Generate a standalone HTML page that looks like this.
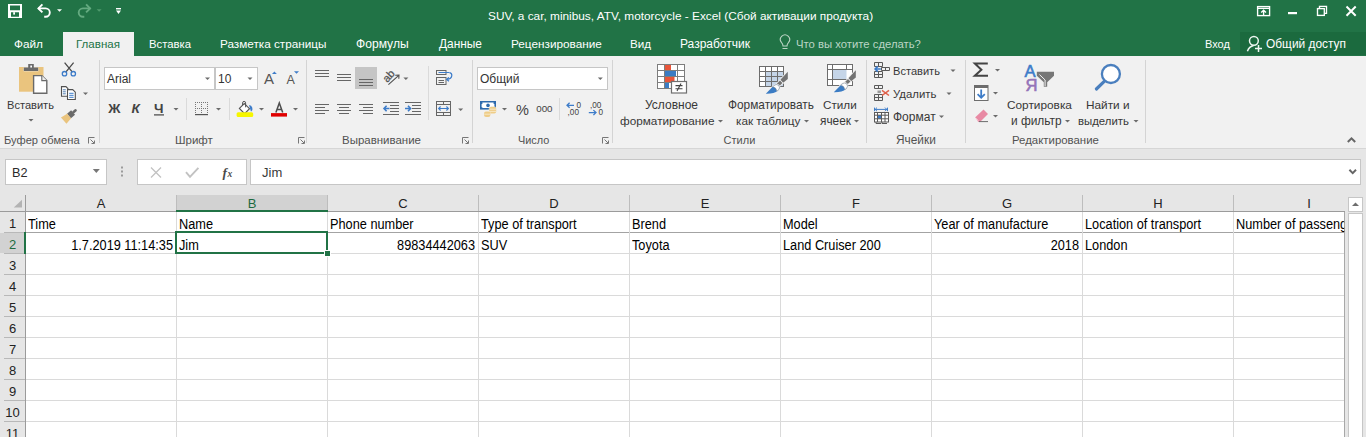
<!DOCTYPE html>
<html><head><meta charset="utf-8">
<style>
*{margin:0;padding:0;box-sizing:border-box}
html,body{width:1366px;height:437px;overflow:hidden;background:#e6e6e6;font-family:"Liberation Sans",sans-serif;position:relative}
.a{position:absolute;white-space:nowrap;line-height:16px}
.tt{color:#fff;font-size:11.83px}
.tab{color:#fff;font-size:11.7px;top:36px}
.rl{font-size:11.7px;color:#383838}
.gl{font-size:11.5px;color:#525252;top:132px}
.cell{font-size:14px;color:#000;line-height:16px;transform:scaleX(0.91);transform-origin:0 0}
.cr{transform-origin:100% 0}
.hd{font-size:13px;line-height:16px}
svg{position:absolute;left:0;top:0;overflow:visible}
</style></head><body>
<div class="a" style="left:0;top:0;width:1366px;height:56px;background:#217346"></div>
<div class="a tt" style="left:488px;top:8px">SUV, a car, minibus, ATV, motorcycle - Excel (Сбой активации продукта)</div>
<div class="a" style="left:63px;top:32px;width:71px;height:24px;background:#f1f1f1"></div>
<div class="a" style="left:1240px;top:32px;width:126px;height:23px;background:#1b6a3e"></div>
<div class="a tab" style="left:14px;font-size:11.79px">Файл</div>
<div class="a tab" style="left:76px;color:#217346;font-size:11.56px">Главная</div>
<div class="a tab" style="left:149px;font-size:11.3px">Вставка</div>
<div class="a tab" style="left:220px;font-size:11.74px">Разметка страницы</div>
<div class="a tab" style="left:356px;font-size:12.1px">Формулы</div>
<div class="a tab" style="left:439px;font-size:11.9px">Данные</div>
<div class="a tab" style="left:511px;font-size:11.78px">Рецензирование</div>
<div class="a tab" style="left:630px;font-size:11.6px">Вид</div>
<div class="a tab" style="left:680px;font-size:12px">Разработчик</div>
<div class="a tab" style="left:796px;color:#bcd5c5;font-size:11.31px">Что вы хотите сделать?</div>
<div class="a tab" style="left:1205px;font-size:11px">Вход</div>
<div class="a tab" style="left:1266px;font-size:11.91px">Общий доступ</div>
<svg width="1366" height="56">
<g fill="#fff">
<path d="M8 4h14v14h-14z M10 5.5v4.8h10v-4.8z M11 12.2v4.5h8v-4.5z" fill-rule="evenodd"/>
<rect x="13.2" y="12.2" width="1.8" height="2.4"/>
</g>
<g fill="none" stroke="#fff" stroke-width="1.9">
<path d="M38 8.4h7.6a4.2 4.2 0 0 1 0 8.4h-1.4"/>
<path d="M42.4 4.4l-4 4l4 4"/>
</g>
<path d="M57 9.2h5l-2.5 2.5z" fill="#fff"/>
<g fill="none" stroke="#64aa80" stroke-width="1.9">
<path d="M90.5 8.4h-7.6a4.2 4.2 0 0 0 0 8.4h1.4"/>
<path d="M86.1 4.4l4 4l-4 4"/>
</g>
<path d="M96.6 9.2h5l-2.5 2.5z" fill="#4f9a6d"/>
<rect x="116" y="8" width="5" height="1.4" fill="#fff"/>
<path d="M116 10.6h5l-2.5 3.3z" fill="#fff"/>
<g fill="none" stroke="#fff" stroke-width="1.35">
<rect x="1257.6" y="6.6" width="12" height="9"/>
<path d="M1257.6 8.4h12 M1263.6 16v-5.6 M1261.2 12.6l2.4-2.4l2.4 2.4"/>
<rect x="1317.5" y="8.6" width="6.8" height="6.8"/>
<path d="M1319.5 8.6v-2.2h7v7h-2.2"/>
</g>
<rect x="1288" y="12" width="9" height="2.2" fill="#fff"/>
<path d="M1346.5 6.5l9.2 9.2M1355.7 6.5l-9.2 9.2" stroke="#fff" stroke-width="2"/>
<g fill="none" stroke="#eef6f1" stroke-width="1.5">
<circle cx="1253.9" cy="40.8" r="4.4"/>
<path d="M1247.4 51.2q1.8-4.6 6.2-5.6"/>
<path d="M1255 48.5h7M1258.5 45v7"/>
</g>
<g fill="none" stroke="#bcd5c5" stroke-width="1.1">
<path d="M782.5 48.5h5M783 46q0-2-1.6-3.6a4.6 4.6 0 1 1 7.2 0q-1.6 1.6-1.6 3.6z"/>
</g>
</svg>
<div class="a" style="left:0;top:56px;width:1366px;height:92px;background:#f1f1f1"></div>
<div class="a" style="left:0;top:148px;width:1366px;height:1px;background:#d6d6d6"></div>
<!-- separators -->
<div class="a" style="left:99px;top:60px;width:1px;height:83px;background:#d4d4d4"></div>
<div class="a" style="left:306px;top:60px;width:1px;height:83px;background:#d4d4d4"></div>
<div class="a" style="left:472px;top:60px;width:1px;height:83px;background:#d4d4d4"></div>
<div class="a" style="left:612px;top:60px;width:1px;height:83px;background:#d4d4d4"></div>
<div class="a" style="left:866px;top:60px;width:1px;height:83px;background:#d4d4d4"></div>
<div class="a" style="left:965px;top:60px;width:1px;height:83px;background:#d4d4d4"></div>
<div class="a" style="left:1145px;top:60px;width:1px;height:83px;background:#d4d4d4"></div>
<!-- small separators -->
<div class="a" style="left:186px;top:98px;width:1px;height:22px;background:#dadada"></div>
<div class="a" style="left:229px;top:98px;width:1px;height:22px;background:#dadada"></div>
<div class="a" style="left:428px;top:66px;width:1px;height:54px;background:#dadada"></div>
<div class="a" style="left:559px;top:98px;width:1px;height:22px;background:#dadada"></div>
<!-- group labels -->
<div class="a gl" style="left:4px;font-size:11.14px">Буфер обмена</div>
<div class="a gl" style="left:175px">Шрифт</div>
<div class="a gl" style="left:342px;font-size:11.48px">Выравнивание</div>
<div class="a gl" style="left:518px;font-size:10.9px">Число</div>
<div class="a gl" style="left:723.6px;font-size:11px">Стили</div>
<div class="a gl" style="left:896px;font-size:11.87px">Ячейки</div>
<div class="a gl" style="left:1012px;font-size:11.42px">Редактирование</div>
<!-- button labels -->
<div class="a rl" style="left:7px;top:97px;font-size:11.09px">Вставить</div>
<div class="a rl" style="left:645px;top:97px;font-size:12px">Условное</div>
<div class="a rl" style="left:620px;top:113px;font-size:11.77px">форматирование</div>
<div class="a rl" style="left:728px;top:97px;font-size:11.85px">Форматировать</div>
<div class="a rl" style="left:736px;top:113px;font-size:11.78px">как таблицу</div>
<div class="a rl" style="left:823px;top:97px;font-size:11.7px">Стили</div>
<div class="a rl" style="left:820px;top:113px;font-size:11.86px">ячеек</div>
<div class="a rl" style="left:893px;top:63px;font-size:11.09px">Вставить</div>
<div class="a rl" style="left:893px;top:86px;font-size:11.39px">Удалить</div>
<div class="a rl" style="left:893px;top:109px;font-size:12px">Формат</div>
<div class="a rl" style="left:1007px;top:97px;font-size:11.84px">Сортировка</div>
<div class="a rl" style="left:1011px;top:113px;font-size:11.9px">и фильтр</div>
<div class="a rl" style="left:1086px;top:97px;font-size:11.82px">Найти и</div>
<div class="a rl" style="left:1078px;top:113px;font-size:11.39px">выделить</div>
<!-- boxes -->
<div class="a" style="left:104px;top:67px;width:111px;height:23px;background:#fff;border:1px solid #c6c6c6"></div>
<div class="a" style="left:215px;top:67px;width:43px;height:23px;background:#fff;border:1px solid #c6c6c6"></div>
<div class="a" style="left:477px;top:67px;width:131px;height:23px;background:#fff;border:1px solid #c6c6c6"></div>
<div class="a rl" style="left:107px;top:71px;font-size:12px;color:#333">Arial</div>
<div class="a rl" style="left:218px;top:71px;font-size:12px;color:#333">10</div>
<div class="a rl" style="left:480px;top:71px;font-size:12px;color:#333">Общий</div>
<div class="a" style="left:355px;top:67px;width:22px;height:22px;background:#c5c5c5"></div>
<svg width="1366" height="150">
<!-- dropdown arrows -->
<g fill="#6b6b6b">
<path d="M28.5 119h5l-2.5 2.5z"/>
<path d="M83 92.4h5l-2.5 2.5z"/>
<path d="M205 77.5h5l-2.5 2.5z"/>
<path d="M247.5 77.5h5l-2.5 2.5z"/>
<path d="M173.5 108h5l-2.5 2.5z"/>
<path d="M216 108h5l-2.5 2.5z"/>
<path d="M259 108h5l-2.5 2.5z"/>
<path d="M293 108h5l-2.5 2.5z"/>
<path d="M403.4 77.4h5l-2.5 2.5z"/>
<path d="M458.2 108.4h5l-2.5 2.5z"/>
<path d="M597.8 77.5h5l-2.5 2.5z"/>
<path d="M502 108h5l-2.5 2.5z"/>
<path d="M718 120h5l-2.5 2.5z"/>
<path d="M804 120h5l-2.5 2.5z"/>
<path d="M854 120h5l-2.5 2.5z"/>
<path d="M950.5 69.4h5l-2.5 2.5z"/>
<path d="M946.5 92.4h5l-2.5 2.5z"/>
<path d="M939 115.4h5l-2.5 2.5z"/>
<path d="M995 69h5l-2.5 2.5z"/>
<path d="M993 92h5l-2.5 2.5z"/>
<path d="M993 115h5l-2.5 2.5z"/>
<path d="M1065 120h5l-2.5 2.5z"/>
<path d="M1133.5 120h5l-2.5 2.5z"/>
</g>
<!-- launchers -->
<g fill="none" stroke="#777" stroke-width="1">
<path d="M88.5 143.5v-6h6 M90.5 139.5l3.5 3.5 M91.5 143.5h3v-3"/>
<path d="M298.5 143.5v-6h6 M300.5 139.5l3.5 3.5 M301.5 143.5h3v-3"/>
<path d="M462.5 143.5v-6h6 M464.5 139.5l3.5 3.5 M465.5 143.5h3v-3"/>
<path d="M602.5 143.5v-6h6 M604.5 139.5l3.5 3.5 M605.5 143.5h3v-3"/>
</g>
<path d="M1347.8 142l3.7-3.7 3.7 3.7" fill="none" stroke="#666" stroke-width="2"/>
<!-- clipboard -->
<rect x="19" y="67" width="24.5" height="24.7" fill="#eac47e"/>
<path d="M23.8 67.6h14.4v3.4h-14.4z M28.2 64h5.6v4.2h-5.6z" fill="#6a6a6a" stroke="#f1f1f1" stroke-width="0.6" paint-order="stroke"/>
<rect x="30.3" y="65.5" width="1.7" height="2" fill="#fff"/>
<path d="M33.6 75.6h8.2l5 5v12.6h-13.2z" fill="#fff" stroke="#6a6a6a" stroke-width="1.4"/>
<path d="M41.8 75.6v5h5" fill="#eee" stroke="#6a6a6a" stroke-width="1.1"/>
<!-- scissors -->
<g fill="none" stroke-width="1.3">
<path d="M64.6 62.6l7.6 9.2M73.6 62.6l-7.6 9.2" stroke="#4a4a4a"/>
<circle cx="64.5" cy="73.7" r="2.2" stroke="#3d7cc9"/>
<circle cx="73.3" cy="73.7" r="2.2" stroke="#3d7cc9"/>
</g>
<!-- copy -->
<g stroke="#505050" stroke-width="1.1" fill="#fff">
<path d="M61.5 86.6h4.4l2 2v7.6h-6.4z"/>
<path d="M67.5 89.6h5.2l2.6 2.6v7.3h-7.8z"/>
</g>
<path d="M62.8 89.8h3M62.8 91.8h3M62.8 93.8h3" stroke="#3d6fa8" stroke-width="0.9"/>
<path d="M69.2 93.3h4.4M69.2 95.3h4.4M69.2 97.3h4.4" stroke="#3d7cc9" stroke-width="1"/>
<!-- format painter -->
<g transform="translate(76.4 109.6) rotate(139)">
<rect x="0" y="-1.3" width="5" height="2.6" rx="1" fill="#6a6a6a"/>
<rect x="4.4" y="-3" width="5.4" height="6" fill="#6a6a6a"/>
<path d="M9.8 -3.2h0.8l6.2 -1v8.4l-6.2 -1h-0.8z" fill="#eac47e"/>
</g>
<!-- grow/shrink font -->
<text x="264" y="84" font-size="15" fill="#555" font-family="Liberation Sans">A</text>
<path d="M272 74l2.4-2.6 2.4 2.6z" fill="#3d7cc9"/>
<text x="286.5" y="84" font-size="12.5" fill="#555" font-family="Liberation Sans">A</text>
<path d="M294 71.2h5l-2.5 2.6z" fill="#3d7cc9"/>
<!-- B I U -->
<text x="108.3" y="113.3" font-size="13.5" font-weight="bold" fill="#444" font-family="Liberation Sans">Ж</text>
<text x="131.5" y="113.3" font-size="13.5" font-weight="bold" font-style="italic" fill="#444" font-family="Liberation Sans">К</text>
<text x="154" y="113" font-size="13.5" font-weight="bold" fill="#444" font-family="Liberation Sans">Ч</text>
<rect x="154" y="114.3" width="10" height="1.2" fill="#444"/>
<!-- borders -->
<g stroke="#777" stroke-width="1" stroke-dasharray="1 1" fill="none">
<path d="M195 102.5h13M195 108.5h13M195.5 102v12M201.5 102v12M207.5 102v12"/>
</g>
<rect x="195" y="114" width="13" height="1.2" fill="#555"/>
<!-- fill color -->
<path d="M239.4 108.4l4.9-4.9 5.2 5.2-4.9 4.9z" fill="#fff" stroke="#555" stroke-width="1.1"/>
<path d="M242.6 105.2v-2.3a1.5 1.5 0 0 1 3 0v4.4" fill="none" stroke="#555" stroke-width="1"/>
<path d="M249 105a3.8 3.8 0 0 1 2 6.8z" fill="#3d7cc9"/>
<rect x="236.6" y="112.3" width="16.6" height="4.8" rx="1.5" fill="#f6f600"/>
<!-- font color -->
<path d="M275.9 112.6l3.4-9.6 3.4 9.6M277.1 109.4h4.4" fill="none" stroke="#4d4d4d" stroke-width="1.5"/>
<rect x="271" y="113.1" width="16" height="3.5" fill="#e00000"/>
<!-- alignment lines -->
<g stroke="#666" stroke-width="1">
<path d="M315 70.5h14M315 73.5h14M315 76.5h14"/>
<path d="M337 74.5h14M337 77.5h14M337 80.5h14"/>
<path d="M359 79.5h14M359 82.5h14M359 85.5h14"/>
<path d="M315 104.5h14M315 107.5h10M315 110.5h14M315 113.5h10"/>
<path d="M337 104.5h14M339 107.5h10M337 110.5h14M339 113.5h10"/>
<path d="M359 104.5h14M363 107.5h10M359 110.5h14M363 113.5h10"/>
<path d="M383 102.5h16M390 105.5h9M390 108.5h9M390 111.5h9M383 114.5h16"/>
<path d="M405 102.5h16M412 105.5h9M412 108.5h9M412 111.5h9M405 114.5h16"/>
</g>
<path d="M384 108.5h5.5M386.6 105.7l-2.6 2.8 2.6 2.8" stroke="#3d7cc9" stroke-width="1.6" fill="none"/>
<path d="M405 108.5h5.5M408 105.7l2.6 2.8-2.6 2.8" stroke="#3d7cc9" stroke-width="1.6" fill="none"/>
<!-- orientation -->
<text x="0" y="0" font-size="11" fill="#505050" stroke="#505050" stroke-width="0.25" font-family="Liberation Sans" transform="translate(387.2 83) rotate(-47)">ab</text>
<path d="M388.4 84.6l10.4-9.2M395.2 75.2l3.8-0.2-0.2 3.8" stroke="#505050" stroke-width="1.1" fill="none"/>
<!-- wrap text -->
<g fill="none" stroke="#666" stroke-width="1">
<rect x="436.5" y="70.5" width="9.5" height="4"/>
<rect x="436.5" y="77.5" width="9.5" height="7"/>
<path d="M438.5 80.5h5.5M438.5 82.5h5.5"/>
</g>
<path d="M438.5 72.5h11" stroke="#3d7cc9" stroke-width="1"/>
<path d="M449.6 72.6q2.4 0.6 2.2 3-0.4 3.2-4.6 3.9M448.8 77.3l-2.2 2.2 2.4 1.8" fill="none" stroke="#3d7cc9" stroke-width="1.2"/>
<!-- merge -->
<g fill="none" stroke="#666" stroke-width="1">
<rect x="436.5" y="101.5" width="14" height="14"/>
<path d="M436.5 104.5h14M436.5 112.5h14M443.5 101.5v3M443.5 112.5v3"/>
</g>
<path d="M438.6 108.5h9.8M440.6 106.5l-2 2 2 2M446.4 106.5l2 2-2 2" stroke="#3d7cc9" stroke-width="1.1" fill="none"/>
<!-- number -->
<rect x="480" y="101" width="16" height="8.6" fill="#2e6aad"/>
<path d="M482.4 102.6h11.2v1.4h0.8v3.2h-0.8v0.8h-11.2v-0.8h-0.8v-3.2h0.8z" fill="#fff"/>
<circle cx="488" cy="105.4" r="1.8" fill="#2e6aad"/>
<g fill="#efcd88" stroke="#f1f1f1" stroke-width="0.6" paint-order="stroke">
<rect x="489.2" y="106.8" width="7" height="6.8" rx="2"/>
<rect x="484" y="111.6" width="6.4" height="5.4" rx="2"/>
</g>
<g stroke="#fbf3e0" stroke-width="0.7"><path d="M489.4 109.2h6.6M489.4 111.4h6.6M484.2 114.2h6"/></g>
<text x="516" y="114.8" font-size="14.5" fill="#444" font-family="Liberation Sans">%</text>
<text x="536.3" y="111.8" font-size="9.8" fill="#444" font-family="Liberation Sans" letter-spacing="-0.1">000</text>
<g font-family="Liberation Sans" font-size="8.2" fill="#444">
<text x="576.6" y="107.6">0</text>
<text x="567.6" y="115.2">,00</text>
<text x="590" y="107.6">,00</text>
<text x="598.4" y="115.2">0</text>
</g>
<path d="M567 105.3h7M569.6 102.8l-2.6 2.5 2.6 2.5" stroke="#3d7cc9" stroke-width="1.3" fill="none"/>
<path d="M588.8 112.6h7M593.4 110.1l2.6 2.5-2.6 2.5" stroke="#3d7cc9" stroke-width="1.3" fill="none"/>
<!-- conditional formatting -->
<rect x="657.5" y="64.5" width="27" height="24" fill="#fff"/>
<rect x="665" y="65" width="6" height="5" fill="#e8553a"/>
<rect x="665" y="71" width="11" height="5" fill="#3b7cc4"/>
<rect x="665" y="77" width="9.5" height="5" fill="#e8553a"/>
<rect x="665" y="83" width="4" height="5" fill="#3b7cc4"/>
<g fill="none" stroke="#7d7d7d" stroke-width="1">
<rect x="657.5" y="64.5" width="27" height="24"/>
<path d="M657.5 70.5h27M657.5 76.5h27M657.5 82.5h27M664.5 64.5v24M677.5 64.5v24"/>
</g>
<rect x="671.5" y="81.5" width="15" height="11.5" fill="#fff" stroke="#707070" stroke-width="1.2"/>
<path d="M675.5 85.6h7M675.5 88.8h7M681 83.6l-4 7.4" stroke="#444" stroke-width="1.1"/>
<!-- format as table -->
<rect x="759.5" y="66.5" width="24" height="20" fill="#fff"/>
<rect x="765.5" y="71.5" width="18" height="15" fill="#c5d5e8"/>
<g fill="none" stroke="#6d6d6d" stroke-width="1">
<rect x="759.5" y="66.5" width="24" height="20"/>
<path d="M759.5 71.5h24M759.5 76.5h24M759.5 81.5h24M765.5 66.5v20M771.5 66.5v20M777.5 66.5v20"/>
</g>
<g transform="translate(0 0)">
<g stroke="#f1f1f1" stroke-width="1.6" paint-order="stroke">
<path d="M787.8 71.8v7.2l-5 4-2.4-3.2z" fill="#737373"/>
<path d="M780 80.6l2.4 2.5-3.4 3.3-2.4-2.4z" fill="#737373"/>
<path d="M765.8 93.8l7.6-7.8q3-2.6 5.2-0.6 2.2 2.2-0.6 5.2-3.8 3.4-12.2 3.2z" fill="#3b7cc4"/>
</g>
<path d="M773.4 86q3-2.6 5.2-0.6 2.2 2.2-0.6 5.2l-1.2 0.4q-0.6-3.6-4-4.2z" fill="#fff" stroke="#8a8a8a" stroke-width="0.5"/>
</g>
<!-- cell styles -->
<rect x="827.5" y="64.5" width="25" height="21" fill="#fff"/>
<rect x="832.5" y="69.5" width="14" height="10" fill="#c5d5e8"/>
<g fill="none" stroke="#6d6d6d" stroke-width="1">
<rect x="827.5" y="64.5" width="25" height="21"/>
<path d="M827.5 69.5h25M827.5 79.5h25M832.5 64.5v21M846.5 64.5v5M846.5 79.5v6"/>
</g>
<g transform="translate(68 -1.6)">
<g stroke="#f1f1f1" stroke-width="1.6" paint-order="stroke">
<path d="M787.8 71.8v7.2l-5 4-2.4-3.2z" fill="#737373"/>
<path d="M780 80.6l2.4 2.5-3.4 3.3-2.4-2.4z" fill="#737373"/>
<path d="M765.8 93.8l7.6-7.8q3-2.6 5.2-0.6 2.2 2.2-0.6 5.2-3.8 3.4-12.2 3.2z" fill="#3b7cc4"/>
</g>
<path d="M773.4 86q3-2.6 5.2-0.6 2.2 2.2-0.6 5.2l-1.2 0.4q-0.6-3.6-4-4.2z" fill="#fff" stroke="#8a8a8a" stroke-width="0.5"/>
</g>
<!-- cells: insert -->
<g fill="none" stroke="#5a5a5a" stroke-width="1">
<path d="M874.5 62.5h8v4h-8z M878.5 62.5v4"/>
<path d="M874.5 71.5h8v6h-8z M874.5 74.5h8 M878.5 71.5v6"/>
<path d="M881.5 67.5h8v3h-8z M885.5 67.5v3"/>
</g>
<path d="M875.2 69h5.6M877.8 66.4l-2.6 2.6 2.6 2.6" stroke="#3d7cc9" stroke-width="1.7" fill="none"/>
<!-- cells: delete -->
<g fill="none" stroke="#5a5a5a" stroke-width="1">
<path d="M874.5 85.5h8v3h-8z M878.5 85.5v3"/>
<path d="M874.5 94.5h8v6h-8z M874.5 97.5h8 M878.5 94.5v6"/>
</g>
<rect x="877.5" y="90.5" width="3.5" height="2.6" fill="#999"/>
<path d="M882 90.3l7 5.2M889 90.3l-7 5.2" stroke="#e0604a" stroke-width="1.5"/>
<!-- cells: format -->
<path d="M875 109.4h12M877 107.6l-1.8 1.8 1.8 1.8M885 107.6l1.8 1.8-1.8 1.8M874.5 107.6v3.6M887.5 107.6v3.6" stroke="#3d7cc9" stroke-width="1" fill="none"/>
<rect x="874.5" y="112.5" width="14" height="9.5" fill="#fff"/>
<rect x="877.5" y="115.2" width="3.6" height="3.6" fill="#3d7cc9"/>
<g fill="none" stroke="#5a5a5a" stroke-width="1">
<rect x="874.5" y="112.5" width="14" height="9.5"/>
<path d="M874.5 115.2h14M874.5 118.8h14M877.5 112.5v9.5M881.5 112.5v9.5M885 112.5v9.5 M876 122v1.5h5 M882 122v1.5h5"/>
</g>
<!-- sigma -->
<path d="M987.8 63.4h-13l6.6 6.4-6.6 6h13.2" fill="none" stroke="#444" stroke-width="2" stroke-linejoin="miter" stroke-miterlimit="3"/>
<!-- fill -->
<rect x="974.5" y="85.5" width="13.5" height="15" fill="#fff" stroke="#6d6d6d" stroke-width="1"/>
<rect x="974.5" y="85.5" width="13.5" height="2.5" fill="#6d6d6d"/>
<path d="M981.2 89.5v8M977.6 94.2l3.6 3.6 3.6-3.6" stroke="#3d7cc9" stroke-width="1.8" fill="none"/>
<!-- eraser -->
<path d="M975 117.5l8.5-8 4.5 4.4-8 8.1h-1.6z" fill="#e88aa4"/>
<path d="M975 117.5l3.2 3.2" stroke="#fff" stroke-width="0.8"/>
<path d="M979 121.6h9" stroke="#6d6d6d" stroke-width="1"/>
<!-- sort -->
<text x="1024.6" y="76.8" font-size="16.6" fill="#3d7cc9" stroke="#3d7cc9" stroke-width="0.6" font-family="Liberation Sans">А</text>
<text x="1025.6" y="90.9" font-size="16.6" fill="#9474b8" stroke="#9474b8" stroke-width="0.6" font-family="Liberation Sans">Я</text>
<path d="M1036.8 71.8h17.2v4l-6.8 6.4v4.6h-3.4v-4.6l-7-6.4z" fill="#777"/>
<path d="M1039.5 74.6l5.6 5.4v6.2" stroke="#fff" stroke-width="0.9" fill="none"/>
<!-- find -->
<circle cx="1110.9" cy="74" r="9" fill="#fff" stroke="#4a7fbe" stroke-width="2.3"/>
<path d="M1104 81.6l-7.6 7.4" stroke="#4a7fbe" stroke-width="3.2" stroke-linecap="round"/>
</svg>
<div class="a" style="left:5px;top:159px;width:102px;height:26px;background:#fff;border:1px solid #c6c6c6"></div>
<div class="a" style="left:12px;top:165px;font-size:12.7px;color:#2a2a2a">B2</div>
<div class="a" style="left:137px;top:159px;width:110px;height:26px;background:#fff;border:1px solid #c6c6c6"></div>
<div class="a" style="left:250px;top:159px;width:1111px;height:26px;background:#fff;border:1px solid #c6c6c6"></div>
<div class="a" style="left:262px;top:165px;font-size:13px;color:#3a3a3a">Jim</div>
<svg width="1366" height="200">
<path d="M92.8 169h7l-3.5 4z" fill="#777"/>
<g fill="#9b9b9b"><rect x="121" y="166.5" width="2" height="2"/><rect x="121" y="170.5" width="2" height="2"/><rect x="121" y="174.5" width="2" height="2"/></g>
<path d="M151 167.5l10 10M161 167.5l-10 10" stroke="#c2c2c2" stroke-width="1.3"/>
<path d="M186 172.2l4 4.6 8.4-9" stroke="#c2c2c2" stroke-width="1.9" fill="none"/>
<text x="222.4" y="176.6" font-size="13.5" font-style="italic" font-weight="bold" font-family="Liberation Serif" fill="#4a4a4a">f</text>
<text x="227.6" y="176.6" font-size="9.5" font-style="italic" font-weight="bold" font-family="Liberation Serif" fill="#4a4a4a">x</text>
<path d="M1349.4 169.8l3.3 3.3 3.3-3.3" stroke="#666" stroke-width="2" fill="none"/>
</svg>
<div class="a" style="left:0;top:195px;width:1345px;height:16px;background:#e6e6e6"></div>
<div class="a" style="left:177px;top:195px;width:150px;height:15px;background:#d2d2d2"></div>
<div class="a" style="left:26px;top:212px;width:1319px;height:225px;background:#fff"></div>
<div class="a" style="left:0;top:212px;width:25px;height:225px;background:#e6e6e6"></div>
<div class="a" style="left:0;top:233px;width:25px;height:20px;background:#d2d2d2"></div>
<div class="a" style="left:26px;top:211px;width:1319px;height:1px;background:#9b9b9b"></div>
<div class="a" style="left:0px;top:211px;width:25px;height:1px;background:#9b9b9b"></div>
<div class="a" style="left:26px;top:232px;width:1319px;height:1px;background:#a3a3a3"></div>
<div class="a" style="left:4px;top:232px;width:21px;height:1px;background:#b8b8b8"></div>
<div class="a" style="left:26px;top:253px;width:1319px;height:1px;background:#dadada"></div>
<div class="a" style="left:4px;top:253px;width:21px;height:1px;background:#b8b8b8"></div>
<div class="a" style="left:26px;top:274px;width:1319px;height:1px;background:#dadada"></div>
<div class="a" style="left:4px;top:274px;width:21px;height:1px;background:#b8b8b8"></div>
<div class="a" style="left:26px;top:295px;width:1319px;height:1px;background:#dadada"></div>
<div class="a" style="left:4px;top:295px;width:21px;height:1px;background:#b8b8b8"></div>
<div class="a" style="left:26px;top:316px;width:1319px;height:1px;background:#dadada"></div>
<div class="a" style="left:4px;top:316px;width:21px;height:1px;background:#b8b8b8"></div>
<div class="a" style="left:26px;top:337px;width:1319px;height:1px;background:#dadada"></div>
<div class="a" style="left:4px;top:337px;width:21px;height:1px;background:#b8b8b8"></div>
<div class="a" style="left:26px;top:358px;width:1319px;height:1px;background:#dadada"></div>
<div class="a" style="left:4px;top:358px;width:21px;height:1px;background:#b8b8b8"></div>
<div class="a" style="left:26px;top:379px;width:1319px;height:1px;background:#dadada"></div>
<div class="a" style="left:4px;top:379px;width:21px;height:1px;background:#b8b8b8"></div>
<div class="a" style="left:26px;top:400px;width:1319px;height:1px;background:#dadada"></div>
<div class="a" style="left:4px;top:400px;width:21px;height:1px;background:#b8b8b8"></div>
<div class="a" style="left:26px;top:421px;width:1319px;height:1px;background:#dadada"></div>
<div class="a" style="left:4px;top:421px;width:21px;height:1px;background:#b8b8b8"></div>
<div class="a" style="left:26px;top:442px;width:1319px;height:1px;background:#dadada"></div>
<div class="a" style="left:4px;top:442px;width:21px;height:1px;background:#b8b8b8"></div>
<div class="a" style="left:25px;top:195px;width:1px;height:242px;background:#9b9b9b"></div>
<div class="a" style="left:176px;top:212px;width:1px;height:225px;background:#dadada"></div>
<div class="a" style="left:176px;top:195px;width:1px;height:16px;background:#bdbdbd"></div>
<div class="a" style="left:327px;top:212px;width:1px;height:225px;background:#dadada"></div>
<div class="a" style="left:327px;top:195px;width:1px;height:16px;background:#bdbdbd"></div>
<div class="a" style="left:478px;top:212px;width:1px;height:225px;background:#dadada"></div>
<div class="a" style="left:478px;top:195px;width:1px;height:16px;background:#bdbdbd"></div>
<div class="a" style="left:629px;top:212px;width:1px;height:225px;background:#dadada"></div>
<div class="a" style="left:629px;top:195px;width:1px;height:16px;background:#bdbdbd"></div>
<div class="a" style="left:780px;top:212px;width:1px;height:225px;background:#dadada"></div>
<div class="a" style="left:780px;top:195px;width:1px;height:16px;background:#bdbdbd"></div>
<div class="a" style="left:931px;top:212px;width:1px;height:225px;background:#dadada"></div>
<div class="a" style="left:931px;top:195px;width:1px;height:16px;background:#bdbdbd"></div>
<div class="a" style="left:1082px;top:212px;width:1px;height:225px;background:#dadada"></div>
<div class="a" style="left:1082px;top:195px;width:1px;height:16px;background:#bdbdbd"></div>
<div class="a" style="left:1233px;top:212px;width:1px;height:225px;background:#dadada"></div>
<div class="a" style="left:1233px;top:195px;width:1px;height:16px;background:#bdbdbd"></div>
<div class="a" style="left:1384px;top:212px;width:1px;height:225px;background:#dadada"></div>
<div class="a" style="left:1384px;top:195px;width:1px;height:16px;background:#bdbdbd"></div>
<div class="a" style="left:1344px;top:212px;width:1px;height:225px;background:#a8a8a8"></div>
<div class="a" style="left:176px;top:210px;width:152px;height:2px;background:#217346"></div>
<div class="a" style="left:24px;top:232px;width:2px;height:22px;background:#217346"></div>
<svg width="30" height="215"><path d="M22 199.8v7.8h-8.2z" fill="#b3b3b3"/></svg>
<div class="a hd" style="left:26px;top:196px;width:150px;text-align:center;color:#222;">A</div>
<div class="a hd" style="left:177px;top:196px;width:150px;text-align:center;color:#222;color:#1e6a3f;">B</div>
<div class="a hd" style="left:328px;top:196px;width:150px;text-align:center;color:#222;">C</div>
<div class="a hd" style="left:479px;top:196px;width:150px;text-align:center;color:#222;">D</div>
<div class="a hd" style="left:630px;top:196px;width:150px;text-align:center;color:#222;">E</div>
<div class="a hd" style="left:781px;top:196px;width:150px;text-align:center;color:#222;">F</div>
<div class="a hd" style="left:932px;top:196px;width:150px;text-align:center;color:#222;">G</div>
<div class="a hd" style="left:1083px;top:196px;width:150px;text-align:center;color:#222;">H</div>
<div class="a hd" style="left:1234px;top:196px;width:150px;text-align:center;color:#222;">I</div>
<div class="a hd" style="left:0;width:25px;text-align:center;top:216px;color:#222;">1</div>
<div class="a hd" style="left:0;width:25px;text-align:center;top:237px;color:#222;color:#1e6a3f;">2</div>
<div class="a hd" style="left:0;width:25px;text-align:center;top:258px;color:#222;">3</div>
<div class="a hd" style="left:0;width:25px;text-align:center;top:279px;color:#222;">4</div>
<div class="a hd" style="left:0;width:25px;text-align:center;top:300px;color:#222;">5</div>
<div class="a hd" style="left:0;width:25px;text-align:center;top:321px;color:#222;">6</div>
<div class="a hd" style="left:0;width:25px;text-align:center;top:342px;color:#222;">7</div>
<div class="a hd" style="left:0;width:25px;text-align:center;top:363px;color:#222;">8</div>
<div class="a hd" style="left:0;width:25px;text-align:center;top:384px;color:#222;">9</div>
<div class="a hd" style="left:0;width:25px;text-align:center;top:405px;color:#222;">10</div>
<div class="a hd" style="left:0;width:25px;text-align:center;top:426px;color:#222;">11</div>
<div class="a cell" style="left:28px;top:216px;">Time</div>
<div class="a cell" style="left:179px;top:216px;">Name</div>
<div class="a cell" style="left:330px;top:216px;">Phone number</div>
<div class="a cell" style="left:481px;top:216px;">Type of transport</div>
<div class="a cell" style="left:632px;top:216px;">Brend</div>
<div class="a cell" style="left:783px;top:216px;">Model</div>
<div class="a cell" style="left:934px;top:216px;">Year of manufacture</div>
<div class="a cell" style="left:1085px;top:216px;">Location of transport</div>
<div class="a cell" style="left:1236px;top:216px;width:118.5px;overflow:hidden;">Number of passeng</div>
<div class="a cell cr" style="left:26px;width:147px;text-align:right;top:237px">1.7.2019 11:14:35</div>
<div class="a cell" style="left:179px;top:237px">Jim</div>
<div class="a cell cr" style="left:328px;width:147px;text-align:right;top:237px">89834442063</div>
<div class="a cell" style="left:481px;top:237px">SUV</div>
<div class="a cell" style="left:632px;top:237px">Toyota</div>
<div class="a cell" style="left:783px;top:237px">Land Cruiser 200</div>
<div class="a cell cr" style="left:932px;width:147px;text-align:right;top:237px">2018</div>
<div class="a cell" style="left:1085px;top:237px">London</div>
<div class="a" style="left:175px;top:231px;width:153px;height:23px;border:2px solid #217346"></div>
<div class="a" style="left:324px;top:250px;width:7px;height:7px;background:#217346;border:1px solid #fff"></div>
<div class="a" style="left:1345px;top:196px;width:21px;height:241px;background:#e6e6e6"></div>
<div class="a" style="left:1348px;top:197px;width:15px;height:15px;background:#fff;border:1px solid #c6c6c6"></div>
<div class="a" style="left:1348px;top:213px;width:15px;height:230px;background:#fff;border:1px solid #c6c6c6"></div>
<svg width="1366" height="215"><path d="M1352 206h7l-3.5-3.6z" fill="#6d6d6d"/></svg>
</body></html>
